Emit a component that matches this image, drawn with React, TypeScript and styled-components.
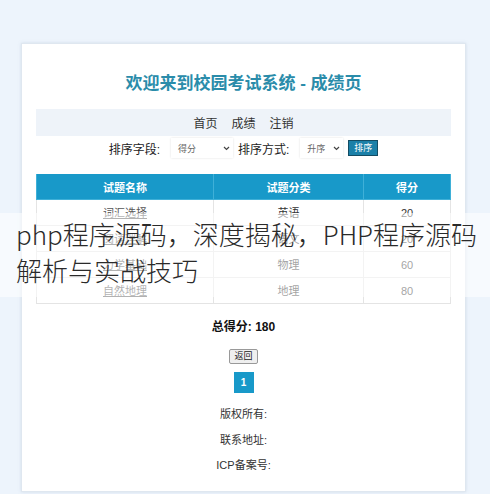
import * as React from 'react';
import styled, { createGlobalStyle } from 'styled-components';

const GlobalStyle = createGlobalStyle`
	html, body {
		margin: 0;
		padding: 0;
		background: #edf4fc;
	}
	body {
		font-family: 'Liberation Sans', 'Noto Sans CJK SC', sans-serif;
		color: #333;
	}
`;

let Page = styled.div`
	position: relative;
	width: 490px;
	height: 494px;
	padding: 43px 0 0 21px;
	box-sizing: border-box;
	overflow: hidden;
`;
let Card = styled.div`
	width: 445px;
	height: 449px;
	box-sizing: border-box;
	background: #fff;
	border: 1px solid #dfe7f0;
	box-shadow: 0 0 3px rgba(160, 180, 200, 0.35);
	padding: 28px 14px 0;
	display: flex;
	flex-direction: column;
	align-items: center;
`;
let Title = styled.h1`
	margin: 0;
	font-size: 17px;
	line-height: 24px;
	font-weight: 700;
	color: #2a8caa;
`;
let Nav = styled.nav`
	margin-top: 13px;
	width: 100%;
	height: 27px;
	background: #eef3f9;
	display: flex;
	justify-content: center;
	align-items: center;
	gap: 14px;
	font-size: 12px;
	& a {
		color: #333;
		text-decoration: none;
	}
`;
let SortRow = styled.div`
	margin-top: 2px;
	height: 20px;
	display: flex;
	align-items: center;
	font-size: 12px;
	color: #222;
`;
let SelectBox = styled.div<{ $w: number }>`
	width: ${(p) => p.$w}px;
	height: 20px;
	box-sizing: border-box;
	margin: 0 5px 0 11px;
	padding: 0 3px 0 7px;
	background: #fff;
	box-shadow: 0 0 2px rgba(0, 0, 0, 0.12);
	display: flex;
	align-items: center;
	justify-content: space-between;
	font-size: 9px;
	color: #666;
`;
let SortButton = styled.button`
	height: 16px;
	padding: 0 5px;
	margin-left: 0;
	background: #1b80a8;
	border: 1px solid #134c63;
	color: #fff;
	font-size: 9px;
	font-family: inherit;
	line-height: 14px;
`;
let Table = styled.table`
	margin-top: 16px;
	width: 100%;
	border-collapse: collapse;
	font-size: 11px;
	& th {
		background: #1899c9;
		color: #fff;
		font-weight: 700;
		height: 25px;
		padding: 0;
		border: 1px solid #3fb0d8;
		border-top: none;
	}
	& td {
		height: 25px;
		padding: 0;
		line-height: 14px;
		text-align: center;
		border: 1px solid #e4e4e4;
		color: #333;
	}
	& td a {
		color: #555;
		text-decoration: underline;
	}
`;
let Total = styled.div`
	margin-top: 15px;
	font-size: 12px;
	line-height: 16px;
	font-weight: 700;
	color: #111;
`;
let BackButton = styled.button`
	margin-top: 14px;
	height: 15px;
	padding: 0 4px;
	font-size: 9px;
	line-height: 11px;
	font-family: inherit;
	background: #efefef;
	border: 1px solid #999;
	border-radius: 2px;
	color: #222;
`;
let PageNum = styled.span`
	margin-top: 8px;
	width: 20px;
	height: 21px;
	background: #1899c9;
	color: #fff;
	font-size: 10px;
	font-weight: 700;
	display: flex;
	align-items: center;
	justify-content: center;
`;
let Footer = styled.div`
	margin-top: 9px;
	display: flex;
	flex-direction: column;
	align-items: center;
	font-size: 11px;
	line-height: 25.5px;
	color: #333;
`;
let Banner = styled.div`
	position: absolute;
	left: 0;
	top: 213px;
	width: 490px;
	height: 84px;
	box-sizing: border-box;
	padding: 3px 0 0 16px;
	background: rgba(255, 255, 255, 0.55);
	font-family: 'Noto Sans CJK SC', sans-serif;
	font-weight: 300;
	font-size: 26px;
	line-height: 36px;
	color: #2a2a2a;
	white-space: nowrap;
`;

const Chevron = () => (
	<svg width='7' height='5' viewBox='0 0 7 5'>
		<path d='M1 1l2.5 2.5L6 1' fill='none' stroke='#444' strokeWidth='1.2' />
	</svg>
);

const rows = [
	{ name: '词汇选择', type: '英语', score: 20 },
	{ name: '阅读理解', type: '语文', score: 20 },
	{ name: '力学基础', type: '物理', score: 60 },
	{ name: '自然地理', type: '地理', score: 80 },
];

const App: React.FunctionComponent = () => {
	let total = rows.reduce((s, r) => s + r.score, 0);
	return (
		<Page>
			<GlobalStyle />
			<Card>
				<Title>欢迎来到校园考试系统 - 成绩页</Title>
				<Nav>
					<a href='#'>首页</a>
					<a href='#'>成绩</a>
					<a href='#'>注销</a>
				</Nav>
				<SortRow>
					排序字段:
					<SelectBox $w={62}>
						得分 <Chevron />
					</SelectBox>
					排序方式:
					<SelectBox $w={43}>
						升序 <Chevron />
					</SelectBox>
					<SortButton>排序</SortButton>
				</SortRow>
				<Table>
					<colgroup>
						<col style={{ width: 177 }} />
						<col style={{ width: 150 }} />
						<col />
					</colgroup>
					<thead>
						<tr>
							<th>试题名称</th>
							<th>试题分类</th>
							<th>得分</th>
						</tr>
					</thead>
					<tbody>
						{rows.map((r) => (
							<tr key={r.name}>
								<td>
									<a href='#'>{r.name}</a>
								</td>
								<td>{r.type}</td>
								<td>{r.score}</td>
							</tr>
						))}
					</tbody>
				</Table>
				<Total>总得分: {total}</Total>
				<BackButton>返回</BackButton>
				<PageNum>1</PageNum>
				<Footer>
					<span>版权所有:</span>
					<span>联系地址:</span>
					<span>ICP备案号:</span>
				</Footer>
			</Card>
			<Banner>
				php程序源码，深度揭秘，PHP程序源码
				<br />
				解析与实战技巧
			</Banner>
		</Page>
	);
};

export default App;
